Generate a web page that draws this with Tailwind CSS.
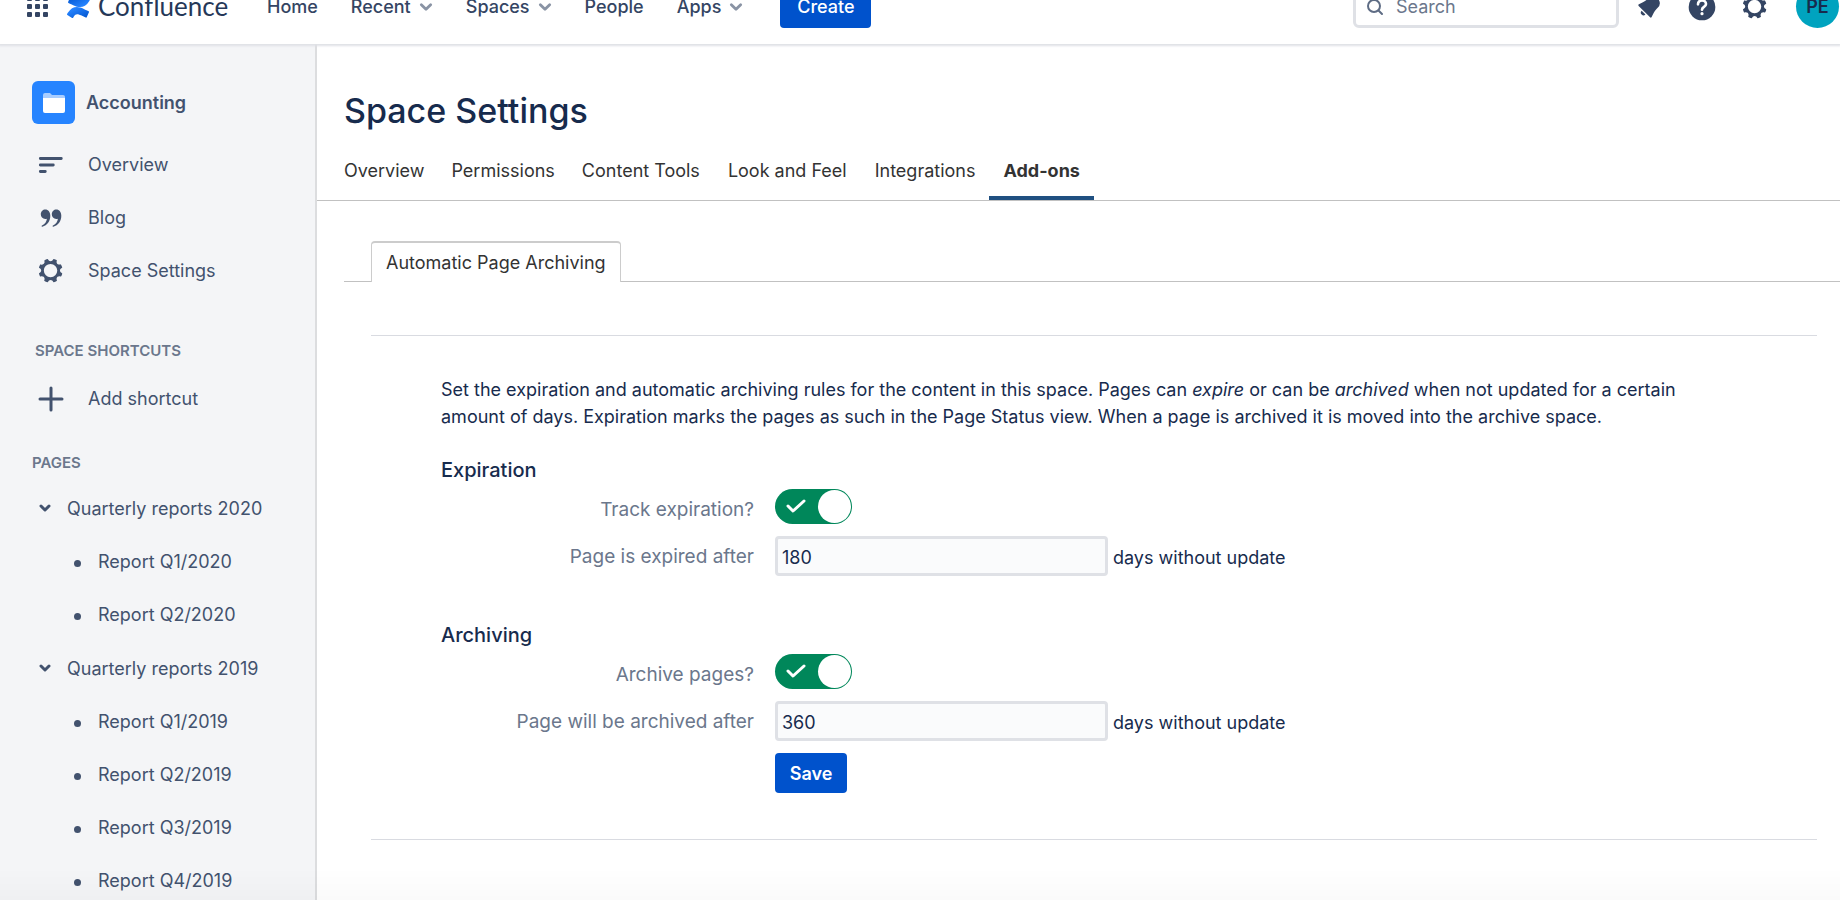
<!DOCTYPE html>
<html lang="en">

<head>
	<meta charset="UTF-8">
	<meta name="viewport" content="width=device-width, initial-scale=1.0">
	<title>Space Settings - Confluence</title>
	<script src="https://cdn.jsdelivr.net/npm/@tailwindcss/browser@4"></script>
</head>

<body class="bg-white font-[Inter,sans-serif] text-[18px] leading-[27px] text-[#172b4d] h-screen overflow-hidden flex flex-col">

	<!-- shared icons -->
	<svg class="hidden">
		<symbol id="gear" viewBox="0 0 24 24">
			<path fill="currentColor" fill-rule="evenodd"
				d="M11.701 16.7a5.002 5.002 0 1 1 0-10.003 5.002 5.002 0 0 1 0 10.004m8.368-3.117a1.995 1.995 0 0 1-1.346-1.885c0-.876.563-1.613 1.345-1.885a.48.48 0 0 0 .315-.574 8.947 8.947 0 0 0-.836-1.993.477.477 0 0 0-.598-.195 2.04 2.04 0 0 1-1.29.08 1.988 1.988 0 0 1-1.404-1.395 2.04 2.04 0 0 1 .076-1.297.478.478 0 0 0-.196-.597 8.98 8.98 0 0 0-1.975-.826.479.479 0 0 0-.574.314 1.995 1.995 0 0 1-1.885 1.346 1.994 1.994 0 0 1-1.884-1.345.482.482 0 0 0-.575-.315c-.708.2-1.379.485-2.004.842a.47.47 0 0 0-.198.582A2.002 2.002 0 0 1 4.445 7.06a.478.478 0 0 0-.595.196 8.946 8.946 0 0 0-.833 1.994.48.48 0 0 0 .308.572 1.995 1.995 0 0 1 1.323 1.877c0 .867-.552 1.599-1.324 1.877a.479.479 0 0 0-.308.57 8.99 8.99 0 0 0 .723 1.79.477.477 0 0 0 .624.194c.595-.273 1.343-.264 2.104.238.117.077.225.185.302.3.527.8.512 1.58.198 2.188a.473.473 0 0 0 .168.628 8.946 8.946 0 0 0 2.11.897.474.474 0 0 0 .57-.313 1.995 1.995 0 0 1 1.886-1.353c.878 0 1.618.567 1.887 1.353a.475.475 0 0 0 .57.313 8.964 8.964 0 0 0 2.084-.883.473.473 0 0 0 .167-.631c-.318-.608-.337-1.393.191-2.195.077-.116.185-.225.302-.302.772-.511 1.527-.513 2.125-.23a.477.477 0 0 0 .628-.19 8.925 8.925 0 0 0 .728-1.793.478.478 0 0 0-.314-.573" />
		</symbol>
		<symbol id="chevron" viewBox="0 0 12 12">
			<path fill="none" stroke="currentColor" stroke-linecap="round" stroke-linejoin="round" d="M2 4l4 4 4-4" />
		</symbol>
	</svg>

	<!-- top navigation -->
	<header class="relative z-10 shrink-0 flex items-center h-[75px] -mt-[31px] pl-[26px] pr-px bg-white shadow-[0_1px_2px_1px_#dfe1e6] text-[#344563]">
		<button class="mr-[18px]" aria-label="Switch to">
			<svg class="w-[23px] h-[23px]" viewBox="0 0 23 23" fill="currentColor">
				<rect x="1" y="1" width="5" height="5" rx="1" /><rect x="9" y="1" width="5" height="5" rx="1" /><rect x="17" y="1" width="5" height="5" rx="1" />
				<rect x="1" y="9" width="5" height="5" rx="1" /><rect x="9" y="9" width="5" height="5" rx="1" /><rect x="17" y="9" width="5" height="5" rx="1" />
				<rect x="1" y="17" width="5" height="5" rx="1" /><rect x="9" y="17" width="5" height="5" rx="1" /><rect x="17" y="17" width="5" height="5" rx="1" />
			</svg>
		</button>
		<a href="#" class="flex items-center gap-2 w-[200px]">
			<svg class="w-[23px] h-[22px]" viewBox="0 0 64 61">
				<defs>
					<linearGradient id="g1" x1="1" y1="1" x2="0.2" y2="0.2">
						<stop offset="0" stop-color="#0052cc" />
						<stop offset="1" stop-color="#2684ff" />
					</linearGradient>
					<linearGradient id="g2" x1="0" y1="0" x2="0.8" y2="0.8">
						<stop offset="0" stop-color="#0052cc" />
						<stop offset="1" stop-color="#2684ff" />
					</linearGradient>
				</defs>
				<path fill="url(#g1)" d="M2.3 46.7c-.7 1.1-1.4 2.3-2 3.3a2 2 0 0 0 .7 2.7l13.2 8.1a2 2 0 0 0 2.8-.7c.5-.9 1.2-2.1 2-3.3 5.2-8.6 10.5-7.5 20-3l13.1 6.2a2 2 0 0 0 2.7-1L61.1 44.8a2 2 0 0 0-1-2.6c-2.8-1.3-8.3-3.9-13.2-6.3C29.3 27.4 14.3 27.9 2.3 46.7z" />
				<path fill="url(#g2)" d="M61.7 14.6c.7-1.1 1.4-2.3 2-3.3a2 2 0 0 0-.7-2.7L49.8.5a2 2 0 0 0-2.8.7c-.5.9-1.2 2.1-2 3.3-5.2 8.6-10.5 7.5-20 3L12 1.3a2 2 0 0 0-2.7 1L3 16.6a2 2 0 0 0 1 2.6c2.8 1.3 8.3 3.9 13.2 6.3 17.6 8.5 32.6 8 44.5-10.9z" />
			</svg>
			<span class="font-[Lato,sans-serif] text-[26px] text-[#253858]">Confluence</span>
		</a>
		<nav class="flex items-center gap-[33px] font-medium">
			<a href="#">Home</a>
			<button class="flex items-center gap-2">Recent <svg class="w-3.5 h-3.5 stroke-[2.4] text-[#8993a4]"><use href="#chevron" /></svg></button>
			<button class="flex items-center gap-2">Spaces <svg class="w-3.5 h-3.5 stroke-[2.4] text-[#8993a4]"><use href="#chevron" /></svg></button>
			<a href="#">People</a>
			<button class="flex items-center gap-2">Apps <svg class="w-3.5 h-3.5 stroke-[2.4] text-[#8993a4]"><use href="#chevron" /></svg></button>
			<button class="h-[42px] w-[91px] ml-1 rounded bg-[#0052cc] text-white">Create</button>
		</nav>
		<div class="ml-auto flex items-center">
			<label class="flex items-center gap-3 w-[266px] h-[42px] px-[10px] mr-[14px] border-[3px] border-[#dfe1e6] rounded-md">
				<svg class="w-[18px] h-[18px] shrink-0 text-[#5e6c84]" viewBox="0 0 18 18" fill="none" stroke="currentColor" stroke-width="2" stroke-linecap="round">
					<circle cx="8" cy="8" r="6" />
					<path d="M12.5 12.5L16 16" />
				</svg>
				<input type="search" aria-label="Search" placeholder="Search" class="w-full min-w-0 outline-none placeholder:text-[#6b778c]">
			</label>
			<button class="mr-[21px]" aria-label="Notifications">
				<svg class="w-8 h-8" viewBox="0 0 24 24" fill="currentColor">
					<path d="M6.485 17.669a2 2 0 0 0 2.829 0l-2.829-2.829a2 2 0 0 0 0 2.829zm4.897-12.191l-.725.725c-.782.782-2.21 1.813-3.206 2.311l-3.017 1.509c-.495.248-.584.774-.187 1.171l8.556 8.556c.398.396.922.313 1.171-.188l1.51-3.016c.494-.988 1.526-2.42 2.311-3.206l.725-.726a5.048 5.048 0 0 0 .64-6.356 1.01 1.01 0 1 0-1.354-1.494c-.023.025-.046.049-.066.075a5.043 5.043 0 0 0-2.788-.84 5.036 5.036 0 0 0-3.57 1.478z" />
				</svg>
			</button>
			<button class="mr-[21px]" aria-label="Help">
				<svg class="w-8 h-8" viewBox="0 0 24 24">
					<circle cx="12" cy="12" r="10" fill="currentColor" />
					<path fill="none" stroke="#fff" stroke-width="2" stroke-linecap="round" stroke-linejoin="round" d="M9 10c0-4 6-4 6-.2 0 2.2-3 2-3 4.2" />
					<circle cx="12" cy="17" r="1.2" fill="#fff" />
				</svg>
			</button>
			<button class="mr-[25px]" aria-label="Settings"><svg class="w-8 h-8"><use href="#gear" /></svg></button>
			<button class="w-[43px] h-[43px] rounded-full bg-[#00a3bf] text-[#172b4d] font-semibold text-[18px]">PE</button>
		</div>
	</header>

	<div class="flex grow min-h-0">

		<!-- sidebar -->
		<aside class="w-[317px] shrink-0 bg-[#f4f5f7] border-r-2 border-[#dcdddf] pt-[37px] text-[#42526e]">
			<a href="#" class="flex items-center gap-[11px] pl-8 mb-[14px] font-semibold">
				<span class="flex items-center justify-center w-[43px] h-[43px] rounded-md bg-[#2684ff]">
					<svg class="w-[22px] h-5" viewBox="0 0 22 20">
						<path fill="#a8cdff" d="M0 2a2 2 0 0 1 2-2h5l2 2h11a2 2 0 0 1 2 2v4H0z" />
						<path fill="#fff" d="M0 5h22v13a2 2 0 0 1-2 2H2a2 2 0 0 1-2-2z" />
					</svg>
				</span>
				Accounting
			</a>
			<nav>
				<a href="#" class="flex items-center h-[53px] pl-[35px] gap-[21px]">
					<svg class="w-8 h-8" viewBox="0 0 32 32" fill="none" stroke="currentColor" stroke-width="2.8" stroke-linecap="round"><path d="M5.3 9.5h21M5.3 16h13M5.3 22.5h5" /></svg>
					Overview
				</a>
				<a href="#" class="flex items-center h-[53px] pl-[35px] gap-[21px]">
					<svg class="w-8 h-8" viewBox="0 0 32 32" fill="currentColor">
						<path id="quote" d="M10.3 7.5c3 0 5 2.5 5 6.3 0 5.5-3 9.6-8 11-.8.2-1-.8-.3-1.2 3-1.6 4.6-4 4.9-6.9-.5.2-1 .3-1.7.3a4.5 4.5 0 0 1-4.4-4.7c0-2.7 2-4.8 4.5-4.8z" />
						<use href="#quote" x="11" />
					</svg>
					Blog
				</a>
				<a href="#" class="flex items-center h-[53px] pl-[35px] gap-[21px]">
					<svg class="w-8 h-8"><use href="#gear" /></svg>
					Space Settings
				</a>
			</nav>
			<h2 class="pl-[35px] mt-10 mb-2 text-[15px] font-semibold text-[#6b778c]">SPACE SHORTCUTS</h2>
			<a href="#" class="flex items-center h-[53px] pl-[35px] gap-[21px]">
				<svg class="w-8 h-8" viewBox="0 0 32 32" fill="none" stroke="currentColor" stroke-width="3" stroke-linecap="round"><path d="M5 16h22M16 5v22" /></svg>
				Add shortcut
			</a>
			<h2 class="pl-8 mt-6 mb-[6px] text-[15px] font-semibold text-[#6b778c]">PAGES</h2>
			<ul>
				<li>
					<a href="#" class="flex items-center h-[53px] pl-[39px] gap-4"><svg class="w-3 h-3 mb-0.5 stroke-3"><use href="#chevron" /></svg>Quarterly reports 2020</a>
					<ul>
						<li><a href="#" class="flex items-center h-[53px] pl-[74px] gap-[17px]"><i class="w-[7px] h-[7px] mt-1 rounded-full bg-current"></i>Report Q1/2020</a></li>
						<li><a href="#" class="flex items-center h-[53px] pl-[74px] gap-[17px]"><i class="w-[7px] h-[7px] mt-1 rounded-full bg-current"></i>Report Q2/2020</a></li>
					</ul>
				</li>
				<li class="mt-px">
					<a href="#" class="flex items-center h-[53px] pl-[39px] gap-4"><svg class="w-3 h-3 mb-0.5 stroke-3"><use href="#chevron" /></svg>Quarterly reports 2019</a>
					<ul>
						<li><a href="#" class="flex items-center h-[53px] pl-[74px] gap-[17px]"><i class="w-[7px] h-[7px] mt-1 rounded-full bg-current"></i>Report Q1/2019</a></li>
						<li><a href="#" class="flex items-center h-[53px] pl-[74px] gap-[17px]"><i class="w-[7px] h-[7px] mt-1 rounded-full bg-current"></i>Report Q2/2019</a></li>
						<li><a href="#" class="flex items-center h-[53px] pl-[74px] gap-[17px]"><i class="w-[7px] h-[7px] mt-1 rounded-full bg-current"></i>Report Q3/2019</a></li>
						<li><a href="#" class="flex items-center h-[53px] pl-[74px] gap-[17px]"><i class="w-[7px] h-[7px] mt-1 rounded-full bg-current"></i>Report Q4/2019</a></li>
					</ul>
				</li>
			</ul>
		</aside>

		<!-- content -->
		<main class="grow min-w-0 pt-[45px]">
			<h1 class="pl-[27px] text-[34px] leading-[44px] font-medium">Space Settings</h1>
			<nav class="flex h-[68px] px-[13px] border-b border-[#c1c1c1] text-[#333]">
				<a href="#" class="px-[14px] pt-6">Overview</a>
				<a href="#" class="px-[13px] pt-6">Permissions</a>
				<a href="#" class="px-[14px] pt-6">Content Tools</a>
				<a href="#" class="px-[14px] pt-6">Look and Feel</a>
				<a href="#" class="px-[14px] pt-6">Integrations</a>
				<a href="#" class="px-[14px] pt-6 border-b-4 border-[#205081] font-bold">Add-ons</a>
			</nav>

			<div class="flex ml-[27px] pl-[27px] mt-10 border-b border-[#c1c1c1] text-[#333]">
				<a href="#" class="h-[41px] -mb-px px-[14px] pt-1.5 bg-white border border-t-2 border-b-0 border-[#ccc] rounded-t">Automatic Page Archiving</a>
			</div>

			<form class="ml-[54px] mr-[23px] mt-[53px] pt-10 pb-[46px] pl-[70px] border-y border-[#d9dbe1]">
				<p class="max-w-[1270px]">Set the expiration and automatic archiving rules for the content in this space. Pages can <em>expire</em> or can be <em>archived</em> when not updated for a certain amount of days. Expiration marks the pages as such in the Page Status view. When a page is archived it is moved into the archive space.</p>

				<h2 class="mt-[27px] text-[20px] font-medium">Expiration</h2>
				<div class="grid grid-cols-[313px_1fr] gap-x-[21px] gap-y-3 mt-[5px] items-center">
					<label for="track" class="text-right text-[19px] text-[#6b778c] pt-1.5">Track expiration?</label>
					<label class="relative w-[77px] h-[35px] rounded-full bg-[#00875a]">
						<input id="track" type="checkbox" checked class="appearance-none absolute inset-0 rounded-full">
						<svg class="absolute left-[11px] top-[9px] w-5 h-4" viewBox="0 0 20 16" fill="none" stroke="#fff" stroke-width="3" stroke-linecap="round" stroke-linejoin="round"><path d="M2 8l5 5L18 3" /></svg>
						<span class="absolute right-px top-px w-[33px] h-[33px] rounded-full bg-white"></span>
					</label>
					<label for="expire-days" class="text-right text-[19px] text-[#6b778c]">Page is expired after</label>
					<div class="flex items-center gap-[5px]">
						<input id="expire-days" type="text" value="180" class="w-[333px] h-10 px-1 pt-0.5 border-[3px] border-[#dfe1e6] rounded bg-[#fafbfc]">
						<span class="pt-0.5">days without update</span>
					</div>
				</div>

				<h2 class="mt-[46px] text-[20px] font-medium">Archiving</h2>
				<div class="grid grid-cols-[313px_1fr] gap-x-[21px] gap-y-3 mt-[5px] items-center">
					<label for="archive" class="text-right text-[19px] text-[#6b778c] pt-1.5">Archive pages?</label>
					<label class="relative w-[77px] h-[35px] rounded-full bg-[#00875a]">
						<input id="archive" type="checkbox" checked class="appearance-none absolute inset-0 rounded-full">
						<svg class="absolute left-[11px] top-[9px] w-5 h-4" viewBox="0 0 20 16" fill="none" stroke="#fff" stroke-width="3" stroke-linecap="round" stroke-linejoin="round"><path d="M2 8l5 5L18 3" /></svg>
						<span class="absolute right-px top-px w-[33px] h-[33px] rounded-full bg-white"></span>
					</label>
					<label for="archive-days" class="text-right text-[19px] text-[#6b778c]">Page will be archived after</label>
					<div class="flex items-center gap-[5px]">
						<input id="archive-days" type="text" value="360" class="w-[333px] h-10 px-1 pt-0.5 border-[3px] border-[#dfe1e6] rounded bg-[#fafbfc]">
						<span class="pt-0.5">days without update</span>
					</div>
					<button type="submit" class="col-start-2 w-[72px] h-10 rounded bg-[#0052cc] text-white font-semibold">Save</button>
				</div>
			</form>
		</main>
	</div>

	<!-- bottom fade -->
	<div class="fixed inset-x-0 bottom-0 h-8 pointer-events-none bg-linear-to-b from-black/0 to-black/2"></div>
</body>

</html>
